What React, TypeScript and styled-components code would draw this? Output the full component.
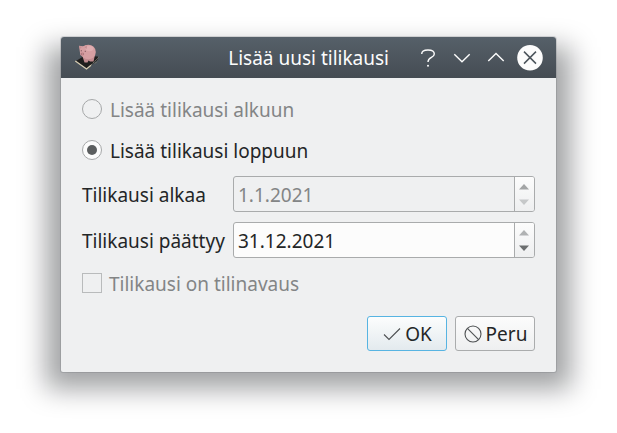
import React from "react";
import styled, { createGlobalStyle } from "styled-components";

const GlobalStyle = createGlobalStyle`
  * { box-sizing: border-box; }
  html, body { margin: 0; background: #fff; overflow: hidden; }
  body { font-family: "Noto Sans", sans-serif; font-size: 19px; color: #232627; }
`;

const Desktop = styled.div`
  isolation: isolate;
  width: 617px;
  height: 433px;
  padding: 37px 61px 61px;
`;

const Dialog = styled.section`
  position: relative;
  width: 495px;
  height: 335px;
  display: flex;
  flex-direction: column;
  border-radius: 3px 3px 2px 2px;
  background: #eff0f1;
  box-shadow: 0 0 0 1px rgba(90, 95, 98, 0.2);

  /* soft window shadow, wider at the sides than a plain spread allows */
  &::before {
    content: "";
    position: absolute;
    z-index: -1;
    inset: 10px -15px -17px;
    background: rgba(0, 4, 8, 0.37);
    filter: blur(13.5px);
  }
`;

const TitleBar = styled.header`
  height: 41px;
  flex: none;
  display: grid;
  grid-template-columns: 26px 1fr 128px;
  align-items: center;
  padding: 0 13px;
  border-radius: 3px 3px 0 0;
  background: linear-gradient(#566069, #454c53);
  color: #fcfcfc;
`;

const Title = styled.h1`
  margin: 0;
  font-size: 19px;
  font-weight: 400;
  line-height: 26px;
  text-align: right;
  padding-right: 26px;
  white-space: nowrap;
`;

const WindowButtons = styled.div`
  display: flex;
  justify-content: space-between;
`;

const WindowButton = styled.button`
  width: 26px;
  height: 26px;
  padding: 0;
  border: 0;
  background: none;
  svg { display: block; }
`;

const Body = styled.main`
  flex: 1;
  padding: 11px 21px 21px;
  display: flex;
  flex-direction: column;
`;

const Option = styled.label<{ $disabled?: boolean; $height: number; $gap: number }>`
  height: ${(p) => p.$height}px;
  display: flex;
  align-items: center;
  gap: ${(p) => p.$gap}px;
  line-height: 26px;
  white-space: nowrap;
  color: ${(p) => (p.$disabled ? "#838586" : "#232627")};
`;

const Radio = styled.span<{ $checked?: boolean }>`
  width: 20px;
  height: 20px;
  display: grid;
  place-items: center;
  border: 1px solid #a6a8a9;
  border-radius: 50%;
  background: ${(p) => (p.$checked ? "#fcfcfc" : "transparent")};
  &::after {
    content: "";
    width: 10px;
    height: 10px;
    border-radius: 50%;
    background: ${(p) => (p.$checked ? "#5b5e5f" : "transparent")};
  }
`;

const CheckBox = styled.span`
  width: 20px;
  height: 20px;
  border: 1px solid #b9bbbc;
`;

const Fields = styled.div`
  display: grid;
  grid-template-columns: 151px 302px;
  grid-auto-rows: 36px;
  row-gap: 10px;
  margin-top: 5px;
  align-items: center;
`;

const Text = styled.span<{ $drop?: number }>`
  padding-top: ${(p) => p.$drop ?? 2}px;
  line-height: 26px;
  white-space: nowrap;
`;

const SpinBox = styled.div<{ $disabled?: boolean }>`
  height: 36px;
  display: grid;
  grid-template-columns: 1fr 20px;
  align-items: center;
  border: 1px solid #a9abac;
  border-radius: 3px;
  overflow: hidden;
  padding-left: 4px;
  line-height: 26px;
  background: ${(p) => (p.$disabled ? "#eff0f1" : "#fcfcfc")};
  color: ${(p) => (p.$disabled ? "#838586" : "#232627")};
`;

const Stepper = styled.div`
  height: 34px;
  border-left: 1px solid #a9abac;
  background: linear-gradient(#fcfcfc, #eeeff0);
  svg { display: block; }
`;

const Actions = styled.footer`
  margin-top: auto;
  display: flex;
  justify-content: flex-end;
  gap: 8px;
`;

const ActionButton = styled.button<{ $primary?: boolean }>`
  width: 80px;
  height: 35px;
  display: flex;
  align-items: center;
  justify-content: center;
  gap: 4px;
  padding: 0 0 0 1px;
  border: 1px solid ${(p) => (p.$primary ? "#57b4e2" : "#aaacad")};
  border-radius: 3px;
  background: ${(p) => (p.$primary ? "linear-gradient(#fcfdfd, #e3eaee)" : "linear-gradient(#fcfcfc, #eeeff0)")};
  font: inherit;
  line-height: 26px;
  color: #232627;
  svg { flex: none; }
`;

const PiggyIcon = () => (
  <svg width="26" height="28" viewBox="0 0 26 28">
    <path d="M2 17 L10 12 L24 12.5 L23.5 16 L13 24.5 Z" fill="#1f1e1d" />
    <path d="M1.3 17 L12.5 25 L17 21.2" fill="none" stroke="#d6cbb0" strokeWidth="1.3" />
    <path d="M17 21 L24.5 13.5 M21 19.5 L23.5 17" fill="none" stroke="#7f7b6c" strokeWidth="1" strokeDasharray="2 1" />
    <path d="M8 11 H21 L19.5 17.5 H16 L14.5 16.5 L13.5 18.5 H10.5 Z" fill="#c28c90" />
    <ellipse cx="14.3" cy="8" rx="7.5" ry="7.3" fill="#d69fa2" />
    <path d="M5 1.8 L9 2.3 L13 1 L13.5 5 L14 10 L10 13 L6.3 11 Z" fill="#d69fa2" />
    <ellipse cx="15.5" cy="4.5" rx="4" ry="2.8" fill="#dfadb0" />
    <path d="M5 1.8 L7.8 3 L6 5 Z M10.6 3.2 L13 1.6 L12.7 5 Z" fill="#c58f93" />
    <ellipse cx="8.3" cy="10" rx="1.9" ry="1.7" fill="#c58a8f" />
    <path d="M6.8 6.8 h.9 M10.8 7.3 h.9" stroke="#5b3c40" strokeWidth="1" />
    <path d="M7.4 10 h.5 M9 10 h.5" stroke="#74494e" strokeWidth="1" />
  </svg>
);

const StepArrows = ({ up, down }: { up: string; down: string }) => (
  <svg width="19" height="34" viewBox="0 0 19 34">
    <path d="M4 12.5 L9 7 L14 12.5 Z" fill={up} />
    <path d="M4 22.5 L9 28 L14 22.5 Z" fill={down} />
  </svg>
);

const stroke = { fill: "none", stroke: "#fcfcfc", strokeWidth: 1.4 };

export default function App() {
  return (
    <>
      <GlobalStyle />
      <Desktop>
        <Dialog>
          <TitleBar>
            <PiggyIcon />
            <Title>Lisää uusi tilikausi</Title>
            <WindowButtons>
              <WindowButton aria-label="Ohje">
                <svg width="26" height="26" viewBox="0 0 26 26">
                  <path d="M6.7 9 C6.7 6 9 5 13 5 C17 5 19.3 6.4 19.3 9 C19.3 13 13 12 13 17" {...stroke} />
                  <circle cx="13" cy="20.8" r="1" fill="#fcfcfc" />
                </svg>
              </WindowButton>
              <WindowButton aria-label="Pienennä">
                <svg width="26" height="26" viewBox="0 0 26 26">
                  <path d="M5.3 9.2 L13 16.8 L20.7 9.2" {...stroke} />
                </svg>
              </WindowButton>
              <WindowButton aria-label="Suurenna">
                <svg width="26" height="26" viewBox="0 0 26 26">
                  <path d="M5.3 16 L13 8.4 L20.7 16" {...stroke} />
                </svg>
              </WindowButton>
              <WindowButton aria-label="Sulje">
                <svg width="26" height="26" viewBox="0 0 26 26">
                  <circle cx="13" cy="12.8" r="12.8" fill="#fcfcfc" />
                  <path d="M7 6.6 L19 18.6 M19 6.6 L7 18.6" fill="none" stroke="#4d555c" strokeWidth="1.5" />
                </svg>
              </WindowButton>
            </WindowButtons>
          </TitleBar>
          <Body>
            <Option $disabled $height={40} $gap={8}>
              <Radio />
              <Text $drop={1}>Lisää tilikausi alkuun</Text>
            </Option>
            <Option $height={42} $gap={8}>
              <Radio $checked />
              <Text $drop={1}>Lisää tilikausi loppuun</Text>
            </Option>
            <Fields>
              <Text>Tilikausi alkaa</Text>
              <SpinBox $disabled>
                <Text>1.1.2021</Text>
                <Stepper>
                  <StepArrows up="#a3a5a6" down="#c6c8c9" />
                </Stepper>
              </SpinBox>
              <Text>Tilikausi päättyy</Text>
              <SpinBox>
                <Text>31.12.2021</Text>
                <Stepper>
                  <StepArrows up="#b0b2b3" down="#6b6e6f" />
                </Stepper>
              </SpinBox>
            </Fields>
            <Option $disabled $height={50} $gap={7}>
              <CheckBox />
              <Text>Tilikausi on tilinavaus</Text>
            </Option>
            <Actions>
              <ActionButton $primary>
                <svg width="18" height="18" viewBox="0 0 18 18">
                  <path d="M1 9.5 L6 14.5 L17 3.5" fill="none" stroke="#4d5052" strokeWidth="1.1" />
                </svg>
                OK
              </ActionButton>
              <ActionButton>
                <svg width="18" height="18" viewBox="0 0 18 18">
                  <circle cx="9" cy="9" r="8" fill="none" stroke="#4d5052" strokeWidth="1.1" />
                  <path d="M3.4 3.4 L14.6 14.6" stroke="#4d5052" strokeWidth="1.1" />
                </svg>
                Peru
              </ActionButton>
            </Actions>
          </Body>
        </Dialog>
      </Desktop>
    </>
  );
}
